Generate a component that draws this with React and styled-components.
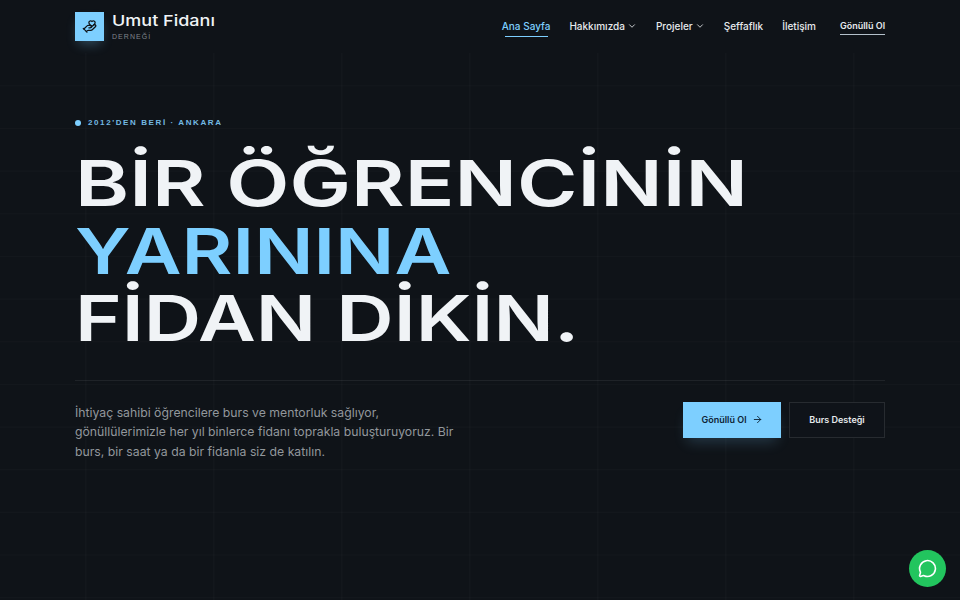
import React from "react";
import styled, { createGlobalStyle } from "styled-components";
import { ChevronDown, ArrowRight, MessageCircle, HandHeart } from "lucide-react";

const GlobalStyle = createGlobalStyle`
  html, body {
    margin: 0;
    padding: 0;
    background: #0f1318;
  }
  * {
    box-sizing: border-box;
  }
`;

const Page = styled.div`
  position: relative;
  width: 960px;
  height: 600px;
  overflow: hidden;
  background-color: #0f1318;
  background-image:
    linear-gradient(rgba(255, 255, 255, 0.018) 1px, transparent 1px),
    linear-gradient(90deg, rgba(255, 255, 255, 0.028) 1px, transparent 1px);
  background-size: 42.667px 42.667px, 128px 128px;
  background-position: 0 0, 85.33px 0;
  font-family: Inter, "Liberation Sans", sans-serif;
  color: #f0f3f6;
`;

const Header = styled.header`
  height: 53px;
  padding: 12px 75px 0;
  display: flex;
  justify-content: space-between;
  align-items: flex-start;
  background: #0f1318;
`;

const Brand = styled.div`
  display: flex;
  gap: 8px;
`;

const LogoBox = styled.div`
  width: 29px;
  height: 29px;
  background: #7dcfff;
  color: #0f1318;
  display: flex;
  align-items: center;
  justify-content: center;
  box-shadow: 0 6px 12px -3px rgba(125, 207, 255, 0.3);
`;

const BrandText = styled.div`
  display: flex;
  flex-direction: column;
`;

const BrandName = styled.span`
  font-family: Inter, sans-serif;
  font-weight: 500;
  font-size: 15px;
  line-height: 18px;
  transform: scaleX(1.2);
  transform-origin: left;
  color: #f0f3f6;
`;

const BrandSub = styled.span`
  font-family: "Liberation Sans", sans-serif;
  font-size: 7px;
  line-height: 9px;
  margin-top: 2px;
  letter-spacing: 1.05px;
  color: #7f858c;
`;

const Nav = styled.nav`
  display: flex;
  align-items: center;
  height: 29px;
`;

const NavItem = styled.a`
  position: relative;
  top: -1px;
  display: flex;
  align-items: center;
  gap: 2px;
  margin-left: 19px;
  font-size: 10px;
  font-weight: 500;
  color: ${(p) => (p.$active ? "#7dcfff" : "#e6e9ec")};
  &::after {
    content: "";
    display: ${(p) => (p.$active ? "block" : "none")};
    position: absolute;
    left: 3px;
    right: 2px;
    bottom: -5px;
    height: 1px;
    background: #7dcfff;
  }
`;

const NavCta = styled.a`
  margin-left: 24px;
  font-size: 9px;
  font-weight: 600;
  padding-bottom: 3px;
  margin-top: 2px;
  border-bottom: 1px solid #b4c0ca;
  color: #e6e9ec;
`;

const Hero = styled.main`
  padding: 65px 75px 0;
`;

const Eyebrow = styled.div`
  display: flex;
  align-items: center;
  gap: 7px;
  font-family: "Liberation Sans", sans-serif;
  font-weight: 700;
  font-size: 8px;
  line-height: 10px;
  letter-spacing: 1.6px;
  color: #74b9e2;
`;

const Dot = styled.span`
  width: 6px;
  height: 6px;
  border-radius: 50%;
  background: #7dcfff;
`;

const Title = styled.h1`
  margin: 22px 0 0;
  font-family: Inter, sans-serif;
  font-weight: 600;
  font-size: 63px;
  line-height: 67.5px;
  white-space: nowrap;
  color: #f0f3f6;
`;

const TitleLine = styled.span`
  display: block;
  transform: scaleX(${(p) => p.$stretch});
  transform-origin: left;
  color: ${(p) => (p.$accent ? "#7dcfff" : "inherit")};
`;

const Lower = styled.section`
  margin-top: 27px;
  padding-top: 21px;
  border-top: 1px solid rgba(255, 255, 255, 0.07);
  display: flex;
  justify-content: space-between;
  align-items: flex-start;
`;

const Lead = styled.p`
  margin: 1px 0 0;
  width: 385px;
  font-size: 12.25px;
  line-height: 19.5px;
  color: #92979c;
`;

const Actions = styled.div`
  display: flex;
  gap: 8px;
`;

const Button = styled.a`
  height: 36px;
  width: ${(p) => (p.$primary ? 98 : 96)}px;
  display: flex;
  align-items: center;
  justify-content: center;
  gap: 5px;
  font-size: 9px;
  font-weight: 600;
  background: ${(p) => (p.$primary ? "#7dcfff" : "#0f1319")};
  color: ${(p) => (p.$primary ? "#0e2436" : "#e6e9ec")};
  border: 1px solid ${(p) => (p.$primary ? "#7dcfff" : "rgba(255,255,255,0.1)")};
  box-shadow: ${(p) => (p.$primary ? "0 8px 14px -4px rgba(125, 207, 255, 0.2)" : "none")};
`;

const ChatFab = styled.a`
  position: absolute;
  right: 14px;
  bottom: 13px;
  width: 37px;
  height: 37px;
  border-radius: 50%;
  background: #22c55e;
  color: #fff;
  display: flex;
  align-items: center;
  justify-content: center;
`;

export default function App() {
  return (
    <Page>
      <GlobalStyle />
      <Header>
        <Brand>
          <LogoBox>
            <HandHeart size={15} strokeWidth={2} />
          </LogoBox>
          <BrandText>
            <BrandName>Umut Fidanı</BrandName>
            <BrandSub>DERNEĞİ</BrandSub>
          </BrandText>
        </Brand>
        <Nav>
          <NavItem $active>Ana Sayfa</NavItem>
          <NavItem>Hakkımızda <ChevronDown size={10} /></NavItem>
          <NavItem>Projeler <ChevronDown size={10} /></NavItem>
          <NavItem>Şeffaflık</NavItem>
          <NavItem>İletişim</NavItem>
          <NavCta>Gönüllü Ol</NavCta>
        </Nav>
      </Header>
      <Hero>
        <Eyebrow>
          <Dot />
          2012'DEN BERİ · ANKARA
        </Eyebrow>
        <Title>
          <TitleLine $stretch={1.305}>BİR ÖĞRENCİNİN</TitleLine>
          <TitleLine $stretch={1.24} $accent>YARININA</TitleLine>
          <TitleLine $stretch={1.262}>FİDAN DİKİN.</TitleLine>
        </Title>
        <Lower>
          <Lead>
            İhtiyaç sahibi öğrencilere burs ve mentorluk sağlıyor, gönüllülerimizle her yıl binlerce fidanı toprakla buluşturuyoruz. Bir burs, bir saat ya da bir fidanla siz de katılın.
          </Lead>
          <Actions>
            <Button $primary>Gönüllü Ol <ArrowRight size={11} /></Button>
            <Button>Burs Desteği</Button>
          </Actions>
        </Lower>
      </Hero>
      <ChatFab>
        <MessageCircle size={19} />
      </ChatFab>
    </Page>
  );
}
